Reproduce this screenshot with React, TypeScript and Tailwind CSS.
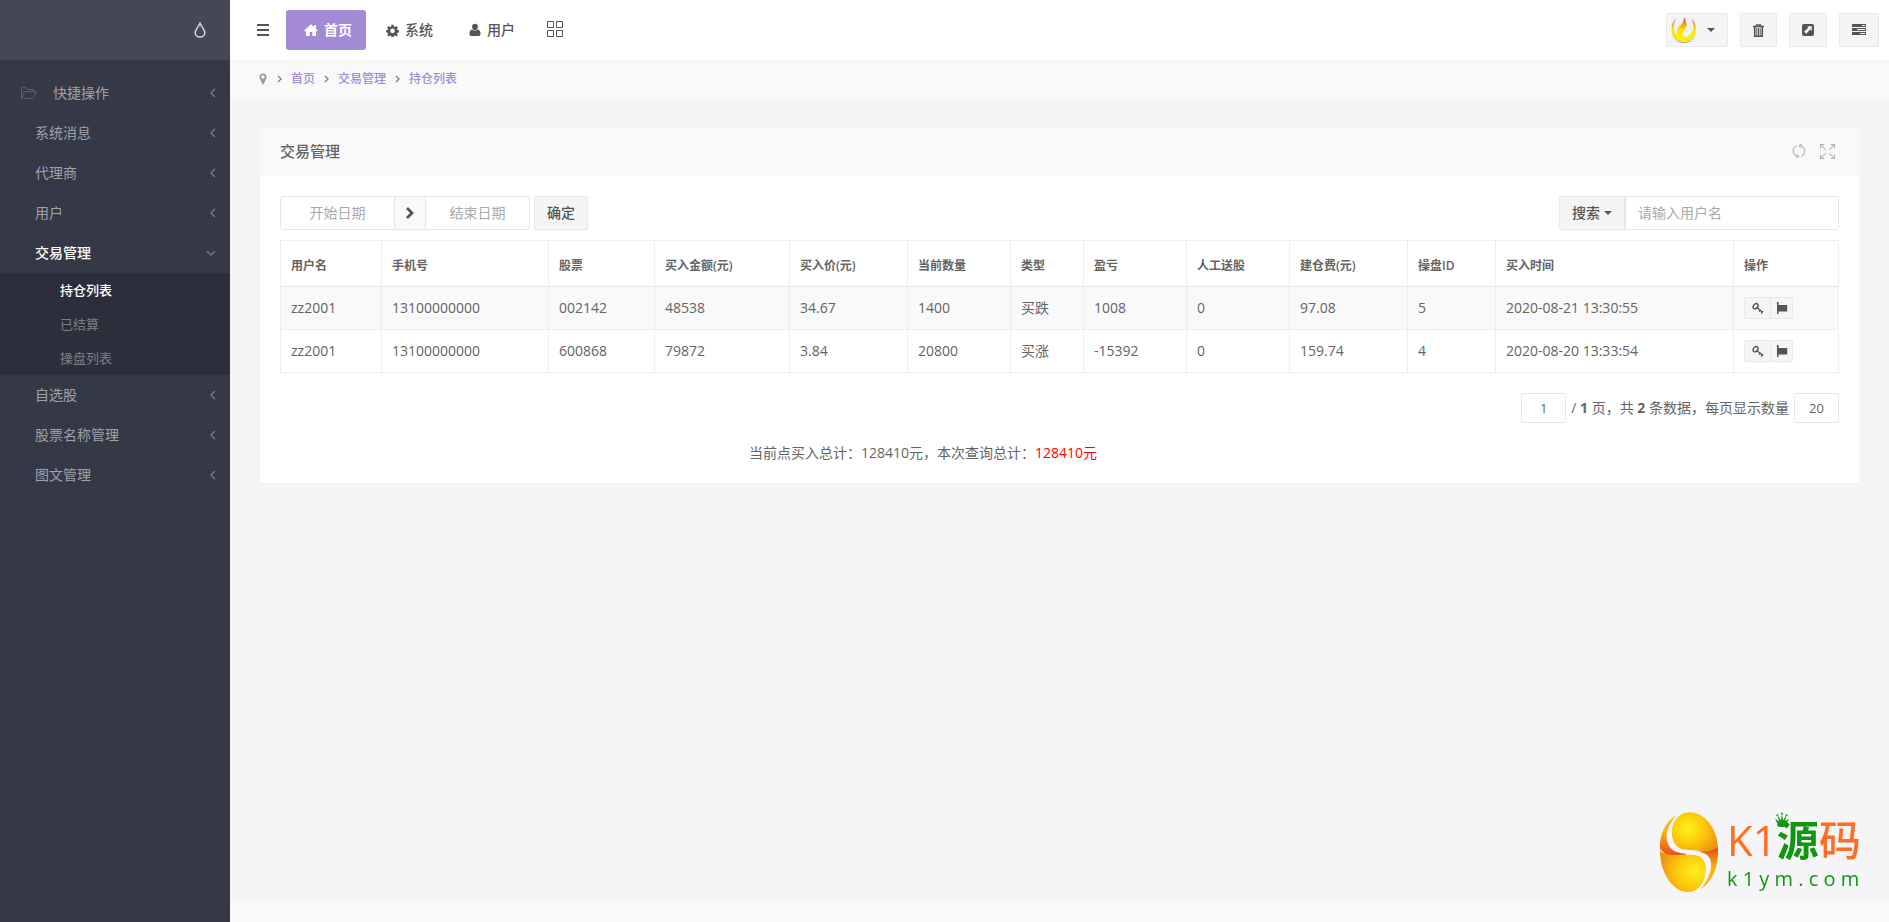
import { useState } from 'react'
import type { ReactNode } from 'react'
import { SlGrid, SlRefresh, SlSizeFullscreen } from 'react-icons/sl'

interface IconProps {
  className?: string
}

const DropIcon = ({ className }: IconProps) => (
  <svg viewBox="0 0 12 16" className={className} fill="none" stroke="currentColor" strokeWidth="1.5">
    <path d="M6 1.2C5 4.2 1.2 7.4 1.2 10.4a4.8 4.6 0 0 0 9.6 0C10.8 7.4 7 4.2 6 1.2z" />
  </svg>
)

const FolderIcon = ({ className }: IconProps) => (
  <svg viewBox="0 0 16 12" className={className} fill="none" stroke="currentColor" strokeLinejoin="round">
    <path d="M.6 11.3V.7h4.2l1.4 1.8h6.2v2.2M.6 11.3l2.8-6.6h11.9l-2.7 6.6z" />
  </svg>
)

const HomeIcon = ({ className }: IconProps) => (
  <svg viewBox="0 0 14 12" className={className} fill="currentColor">
    <path d="M7 .3.2 6.6l.7.8L2 6.9V12h3.7V8h2.6v4H12V6.9l1.1.5.7-.8L12 4.9V1h-1.8v2.2z" />
  </svg>
)

const CogIcon = ({ className }: IconProps) => (
  <svg viewBox="0 0 14 14" className={className} fill="currentColor" fillRule="evenodd">
    <path d="M5.9.8h2.2l.4 1.8 1.1.5 1.6-1 1.6 1.6-1 1.6.5 1.1 1.8.4V9l-1.8.4-.5 1.1 1 1.6-1.6 1.2-1.6-.8-1.1.4-.4 1.1H5.9l-.4-1.1-1.1-.4-1.6.8-1.6-1.2 1-1.6-.5-1.1L.1 9V6.8l1.6-.4.5-1.1-1-1.6 1.6-1.6 1.6 1 1.1-.5zM7 4.9a2.5 2.5 0 1 0 0 5 2.5 2.5 0 0 0 0-5z" />
  </svg>
)

const UserIcon = ({ className }: IconProps) => (
  <svg viewBox="0 0 12 14" className={className} fill="currentColor">
    <path d="M6 .8C7.8.8 8.9 2 8.9 3.7S7.6 7.2 6 7.2 3.1 5.400 3.1 3.700 4.200.8 6 .8z" />
    <path d="M3.200 6.600a4.500 4.500 0 0 0 5.600 0c1.900.5 2.700 2 2.700 3.900 0 1.800-.5 2.500-1.600 2.500H2.100C1 13 .5 12.300.5 10.500c0-1.900.8-3.400 2.700-3.900z" />
  </svg>
)

const TrashIcon = ({ className }: IconProps) => (
  <svg viewBox="0 0 11 13" className={className} fill="none" stroke="currentColor">
    <path d="M0 2.500h11M3.500 2V.8h4V2" strokeWidth="1.300" />
    <path d="M1.700 3v9.200h7.600V3" strokeWidth="1.600" />
    <path d="M3.800 4v8M5.500 4v8M7.200 4v8" />
  </svg>
)

const ShareIcon = ({ className }: IconProps) => (
  <svg viewBox="0 0 12 12" className={className} fill="currentColor" fillRule="evenodd">
    <path d="M2 0h8a2 2 0 0 1 2 2v8a2 2 0 0 1-2 2H2a2 2 0 0 1-2-2V2a2 2 0 0 1 2-2zm3 2.200 1.400 1.400-4.300 4.200 2 2 4.200-4.300L9.800 7V2.200z" />
  </svg>
)

const TasksIcon = ({ className }: IconProps) => (
  <svg viewBox="0 0 14 12" className={className} fill="currentColor" fillRule="evenodd">
    <path d="M0 0h14v3H0zm10 1v1h3v-1zM0 4h14v3H0zm5 1v1h8v-1zM0 8h14v3H0zm8 1v1h5v-1z" />
  </svg>
)

const PinIcon = ({ className }: IconProps) => (
  <svg viewBox="0 0 8 12" className={className} fill="currentColor" fillRule="evenodd">
    <path d="M4 .4a3.500 3.500 0 0 1 3.500 3.500C7.500 5 7.200 5.700 6.900 6.300L4.500 11.200c-.2.500-.8.500-1 0L1.100 6.300C.8 5.700.5 5 .5 3.900A3.500 3.500 0 0 1 4 .4zm0 1.900a1.700 1.700 0 1 0 0 3.400 1.700 1.700 0 0 0 0-3.400z" />
  </svg>
)

const KeyIcon = ({ className }: IconProps) => (
  <svg viewBox="0 0 12 12" className={className} fill="none" stroke="currentColor">
    <ellipse cx="3.600" cy="4.200" rx="2.900" ry="2.100" strokeWidth="1.400" transform="rotate(-50 3.600 4.200)" />
    <path d="M4.800 5.400l6 5M7 9.600l1.700-2M9.200 11.600l1.900-2.400" strokeWidth="1.300" />
  </svg>
)

const FlagIcon = ({ className }: IconProps) => (
  <svg viewBox="0 0 12 12" className={className} fill="currentColor">
    <path d="M1.500 0a1 1 0 0 1 1 1.700v1.300h8.700v6.500H2.500V12H1V1.700A1 1 0 0 1 1.500 0z" />
  </svg>
)

const Chevron = ({ className }: IconProps) => (
  <svg viewBox="0 0 6 10" className={className} fill="none" stroke="currentColor">
    <path d="M1 1l4 4-4 4" strokeWidth="1.500" />
  </svg>
)

const Caret = () => <span className="inline-block border-x-4 border-t-4 border-x-transparent border-t-current" />

const FlameAvatar = () => (
  <svg viewBox="0 0 26 26" className="size-[26px]">
    <defs>
      <linearGradient id="flame" x1="0" y1="0" x2="0" y2="26" gradientUnits="userSpaceOnUse">
        <stop offset="0" stopColor="#cf3a1e" />
        <stop offset=".25" stopColor="#f8901a" />
        <stop offset=".48" stopColor="#fde400" />
        <stop offset="1" stopColor="#fff000" />
      </linearGradient>
    </defs>
    <rect width="26" height="26" fill="#edf2f8" />
    <path d="M1 14a12 12 0 0 0 24 0c0 3-2 7-5 9-5 3-12 2-15-1-2-2-4-5-4-8z" fill="#a5a58c" />
    <path
      d="M5 1.500C1.800 4.500.4 8.500.5 12.500a12.200 12.200 0 0 0 24.400.3C25 8.300 23.600 4.500 20.500 1.500c2.300 4.500 2.900 9 1.200 12.500C20 17.600 17 20 13 20.200c-2-2.500-1.800-4.200.2-7 2.300-3 3.200-4.500 2-7.200C14.600 4.200 14 2.500 14.200.4 12 2 12.800 4.500 11.200 6.500 9 9.200 6 11.200 6 14.500c0 1.800.6 3.300 1.800 4.800C4 17 2.600 13.500 2.800 9.500 2.900 6.500 3.500 4 5 1.500z"
      fill="url(#flame)"
    />
    <path d="M12.500 19.500c-1-3 .8-5 2.500-7.200.6 3 .7 5-.5 7z" fill="#edf2f8" />
  </svg>
)

const menu = [
  { label: '系统消息' },
  { label: '代理商' },
  { label: '用户' },
  { label: '交易管理', children: ['持仓列表', '已结算', '操盘列表'] },
  { label: '自选股' },
  { label: '股票名称管理' },
  { label: '图文管理' },
]

const columns = [
  { label: '用户名', width: 'w-[101px]' },
  { label: '手机号', width: 'w-[167px]' },
  { label: '股票', width: 'w-[106px]' },
  { label: '买入金额(元)', width: 'w-[135px]' },
  { label: '买入价(元)', width: 'w-[118px]' },
  { label: '当前数量', width: 'w-[103px]' },
  { label: '类型', width: 'w-[73px]' },
  { label: '盈亏', width: 'w-[103px]' },
  { label: '人工送股', width: 'w-[103px]' },
  { label: '建仓费(元)', width: 'w-[118px]' },
  { label: '操盘ID', width: 'w-[88px]' },
  { label: '买入时间', width: 'w-[238px]' },
  { label: '操作', width: 'w-[105px]' },
]

const rows = [
  ['zz2001', '13100000000', '002142', '48538', '34.67', '1400', '买跌', '1008', '0', '97.08', '5', '2020-08-21 13:30:55'],
  ['zz2001', '13100000000', '600868', '79872', '3.84', '20800', '买涨', '-15392', '0', '159.74', '4', '2020-08-20 13:33:54'],
]

function Sidebar() {
  return (
    <aside className="w-[230px] shrink-0 bg-[#353847] text-[#a0a2aa]">
      <div className="flex h-[60px] items-center justify-end bg-[#444756] pr-6">
        <button type="button" aria-label="主题" className="text-[#d6d7db]">
          <DropIcon className="h-4 w-3" />
        </button>
      </div>
      <nav className="pt-[13px]">
        <a href="#" className="flex h-10 items-center pr-[14px] pl-[21px]">
          <FolderIcon className="mr-4 h-3 w-4 text-[#5d606d]" />
          快捷操作
          <Chevron className="ml-auto h-[10px] w-[6px] rotate-180 text-[#747781]" />
        </a>
        {menu.map((item) => (
          <div key={item.label}>
            <a
              href="#"
              className={`flex h-10 items-center pr-[14px] pl-[35px] ${item.children ? 'font-medium text-white' : ''}`}
            >
              {item.label}
              {item.children ? (
                <Chevron className="mr-[2px] ml-auto h-[10px] w-[6px] rotate-90 text-[#747781]" />
              ) : (
                <Chevron className="ml-auto h-[10px] w-[6px] rotate-180 text-[#747781]" />
              )}
            </a>
            {item.children && (
              <ul className="bg-[#2c2e3c] text-[13px]">
                {item.children.map((child, i) => (
                  <li key={child}>
                    <a
                      href="#"
                      className={`flex h-[34px] items-center pl-[60px] ${i === 0 ? 'font-medium text-white' : 'text-[#7d7f87]'}`}
                    >
                      {child}
                    </a>
                  </li>
                ))}
              </ul>
            )}
          </div>
        ))}
      </nav>
    </aside>
  )
}

function HeaderButton({ label, children }: { label: string; children: ReactNode }) {
  return (
    <button
      type="button"
      aria-label={label}
      className="flex h-[34px] items-center rounded-xs border border-[#e9e9e9] bg-[#f5f5f5] px-3 text-[#545454]"
    >
      {children}
    </button>
  )
}

function Header() {
  return (
    <header className="flex h-[60px] items-center bg-white pr-[10px] pl-[27px] font-medium text-[#555]">
      <button type="button" aria-label="菜单" className="mr-[17px] flex w-3 flex-col gap-[3px]">
        <span className="h-[2px] bg-[#555]" />
        <span className="h-[2px] bg-[#555]" />
        <span className="h-[2px] bg-[#555]" />
      </button>
      <a href="#" className="flex h-10 items-center rounded-[3px] bg-[#a48ad4] pr-[14px] pl-[18px] font-bold text-white">
        <HomeIcon className="mr-[6px] h-3 w-[14px]" />
        首页
      </a>
      <a href="#" className="ml-5 flex items-center">
        <CogIcon className="mr-[6px] size-[13px]" />
        系统
      </a>
      <a href="#" className="ml-9 flex items-center">
        <UserIcon className="mr-[6px] h-[14px] w-3" />
        用户
      </a>
      <a href="#" aria-label="应用" className="ml-8 pb-[2px]">
        <SlGrid className="size-4" />
      </a>
      <div className="ml-auto flex gap-3">
        <button
          type="button"
          aria-label="账户"
          className="flex h-[34px] w-[62px] items-center gap-[10px] rounded-xs border border-[#e9e9e9] bg-[#f5f5f5] pl-1 text-[#545454]"
        >
          <FlameAvatar />
          <Caret />
        </button>
        <HeaderButton label="清除缓存">
          <TrashIcon className="h-[13px] w-[11px]" />
        </HeaderButton>
        <HeaderButton label="打开前台">
          <ShareIcon className="size-3" />
        </HeaderButton>
        <HeaderButton label="侧栏">
          <TasksIcon className="h-3 w-[14px]" />
        </HeaderButton>
      </div>
    </header>
  )
}

function Breadcrumb() {
  return (
    <nav className="flex h-[38px] items-center bg-[#f9f9f9] bg-linear-to-b from-[#f5f5f5] to-[#f9f9f9] to-20% pl-[29px] text-xs font-medium text-[#a48ad4]">
      <PinIcon className="mr-px h-3 w-2 text-[#999]" />
      {['首页', '交易管理', '持仓列表'].map((item) => (
        <span key={item} className="flex items-center">
          <Chevron className="mx-[9px] h-2 w-[5px] text-[#777]" />
          <a href="#">{item}</a>
        </span>
      ))}
    </nav>
  )
}

function Toolbar() {
  return (
    <div className="flex justify-between">
      <form className="flex h-[34px]">
        <input
          type="text"
          aria-label="开始日期"
          placeholder="开始日期"
          className="w-[115px] rounded-l-[3px] border border-[#e6e6e6] text-center placeholder-[#aaa] outline-none"
        />
        <span className="flex w-[30px] items-center justify-center border-y border-[#e6e6e6] bg-[#f9f9f9]">
          <svg viewBox="0 0 10 12" className="h-3 w-[10px]" fill="none" stroke="#555" strokeWidth="2.8">
            <path d="M2 1l5 5-5 5" />
          </svg>
        </span>
        <input
          type="text"
          aria-label="结束日期"
          placeholder="结束日期"
          className="w-[105px] rounded-r-[3px] border border-[#e6e6e6] text-center placeholder-[#aaa] outline-none"
        />
        <button type="button" className="ml-1 w-[54px] rounded-xs border border-[#e9e9e9] bg-[#f5f5f5] font-medium text-[#545454]">
          确定
        </button>
      </form>
      <form className="flex h-[34px]">
        <button
          type="button"
          className="flex w-[66px] items-center justify-center gap-1 rounded-l-xs border border-[#e9e9e9] bg-[#f5f5f5] font-medium text-[#545454]"
        >
          搜索
          <Caret />
        </button>
        <input
          type="text"
          aria-label="请输入用户名"
          placeholder="请输入用户名"
          className="w-[214px] rounded-r-[3px] border border-[#e6e6e6] px-3 placeholder-[#aaa] outline-none"
        />
      </form>
    </div>
  )
}

function PositionTable() {
  return (
    <table className="mt-[10px] w-full table-fixed border-collapse border border-[#eee] text-left">
      <thead>
        <tr className="h-[46px] border-b border-[#e6e6e6]">
          {columns.map((col) => (
            <th key={col.label} className={`${col.width} border-x border-[#eee] px-[10px] pt-1 text-xs font-semibold`}>
              {col.label}
            </th>
          ))}
        </tr>
      </thead>
      <tbody>
        {rows.map((row, r) => (
          <tr key={r} className="h-[43px] border-b border-[#eee] odd:bg-[#f9f9f9]">
            {row.map((cell, c) => (
              <td key={c} className="border-x border-[#eee] px-[10px]">
                {cell}
              </td>
            ))}
            <td className="px-[10px]">
              <div className="flex h-[22px] w-fit divide-x divide-[#e9e9e9] rounded-xs border border-[#e9e9e9] bg-[#f5f5f5] text-[#545454]">
                <button type="button" aria-label="编辑" className="flex w-[26px] items-center justify-center">
                  <KeyIcon className="size-3" />
                </button>
                <button type="button" aria-label="平仓" className="flex w-[21px] items-center justify-center">
                  <FlagIcon className="size-3" />
                </button>
              </div>
            </td>
          </tr>
        ))}
      </tbody>
    </table>
  )
}

function Pagination() {
  const [page, setPage] = useState('1')
  const [size, setSize] = useState('20')

  return (
    <div className="mt-5 flex items-center justify-end gap-[5px]">
      <input
        type="text"
        aria-label="页码"
        value={page}
        onChange={(e) => setPage(e.target.value)}
        className="h-[30px] w-[45px] rounded-[3px] border border-[#e6e6e6] text-center text-[13px] outline-none"
      />
      <span>
        / <strong>1</strong> 页，共 <strong>2</strong> 条数据，每页显示数量
      </span>
      <input
        type="text"
        aria-label="每页显示数量"
        value={size}
        onChange={(e) => setSize(e.target.value)}
        className="h-[30px] w-[45px] rounded-[3px] border border-[#e6e6e6] text-center text-[13px] outline-none"
      />
    </div>
  )
}

function Watermark() {
  return (
    <div className="fixed right-[28px] bottom-[29px] flex items-center gap-[8px]">
      <svg viewBox="0 0 60 82" className="h-[82px] w-[60px]">
        <defs>
          <radialGradient id="eggTop" cx=".35" cy=".4" r=".75">
            <stop offset="0" stopColor="#fff01c" />
            <stop offset=".5" stopColor="#fdc80a" />
            <stop offset="1" stopColor="#ee8d14" />
          </radialGradient>
          <radialGradient id="eggBottom" cx=".75" cy=".5" r=".8">
            <stop offset="0" stopColor="#fff01c" />
            <stop offset=".5" stopColor="#fdc80a" />
            <stop offset="1" stopColor="#ee8d14" />
          </radialGradient>
          <linearGradient id="eggLeft" x1="0" y1="0" x2="0" y2="1">
            <stop offset=".4" stopColor="#fbb30e" />
            <stop offset="1" stopColor="#e2491d" />
          </linearGradient>
          <linearGradient id="eggRight" x1="0" y1="0" x2="0" y2="1">
            <stop offset="0" stopColor="#e2491d" />
            <stop offset=".5" stopColor="#fbb30e" />
          </linearGradient>
        </defs>
        <path d="M30 1C45 1 60 19 60 41c0 23-13 40-30 40S0 64 0 41C0 19 15 1 30 1z" fill="#f6f6f9" />
        <path d="M18 4C8 14 5 26 10 35c4 6 10 7 18 8C17 48 7 45 1 38 0 23 7 10 18 4z" fill="url(#eggLeft)" />
        <path d="M14 29C10 16 16 6 25 2 42-3 59 15 59 38c-3 4-8 5-14 3-11-4-26 2-31-12z" fill="url(#eggTop)" />
        <path d="M1 40c9 6 20 3 33 4 11 0 15 10 12 21-2 9-8 16-17 16C14 81 1 62 1 40z" fill="url(#eggBottom)" />
        <path d="M35 40c10 1 17 1 24-4 1 19-5 34-17 42 9-12 12-22 9-30-2-5-7-7-16-8z" fill="url(#eggRight)" />
      </svg>
      <div className="flex w-[134px] flex-col pt-1">
        <div className="flex h-[50px] items-center justify-between text-[42px] leading-[50px] text-[#ff6c22]">
          <span>K1</span>
          <span className="relative font-bold text-[#109610]">
            源
            <svg viewBox="0 0 16 16" className="absolute top-[-3px] left-[-3px] size-4" fill="#109610">
              <path d="M3.500 12 1 6.500l4 3L3.500 3 7 8.500 8 1l1 7.500L12.500 3 11 9.500l4-3L12.500 12c1 1.500 0 3-4.500 3s-5.500-1.500-4.500-3z" />
              <circle cx="8" cy="1.500" r="1" />
              <circle cx="3.400" cy="3.200" r="1" />
              <circle cx="12.600" cy="3.200" r="1" />
            </svg>
          </span>
          <span className="font-medium">码</span>
        </div>
        <div className="text-xl font-medium whitespace-nowrap text-[#109610]">k 1 y m . c o m</div>
      </div>
    </div>
  )
}

export default function App() {
  return (
    <div className="flex min-h-screen bg-[#f5f5f8] font-['Open_Sans','Noto_Sans_CJK_SC',sans-serif] text-sm text-[#646464]">
      <Sidebar />
      <div className="flex min-w-0 flex-1 flex-col">
        <Header />
        <Breadcrumb />
        <main className="flex-1 px-[30px] pt-[30px]">
          <section className="bg-white shadow-[0_2px_0_rgba(0,0,0,0.01)]">
            <div className="flex h-12 items-center justify-between bg-[#f9f9f9] pr-6 pl-5">
              <h3 className="text-[15px] font-medium">交易管理</h3>
              <div className="flex gap-[14px] pb-[2px] text-[#b4b4b4]">
                <button type="button" aria-label="刷新">
                  <SlRefresh className="size-[14px]" strokeWidth="20" />
                </button>
                <button type="button" aria-label="全屏">
                  <SlSizeFullscreen className="size-[15px]" strokeWidth="20" />
                </button>
              </div>
            </div>
            <div className="p-5">
              <Toolbar />
              <PositionTable />
              <Pagination />
              <p className="mt-5 w-33/40 text-center">
                当前点买入总计：128410元，本次查询总计：<span className="text-[#f00]">128410元</span>
              </p>
            </div>
          </section>
        </main>
        <footer className="h-5 bg-[#f9f9f9]" />
      </div>
      <Watermark />
    </div>
  )
}
